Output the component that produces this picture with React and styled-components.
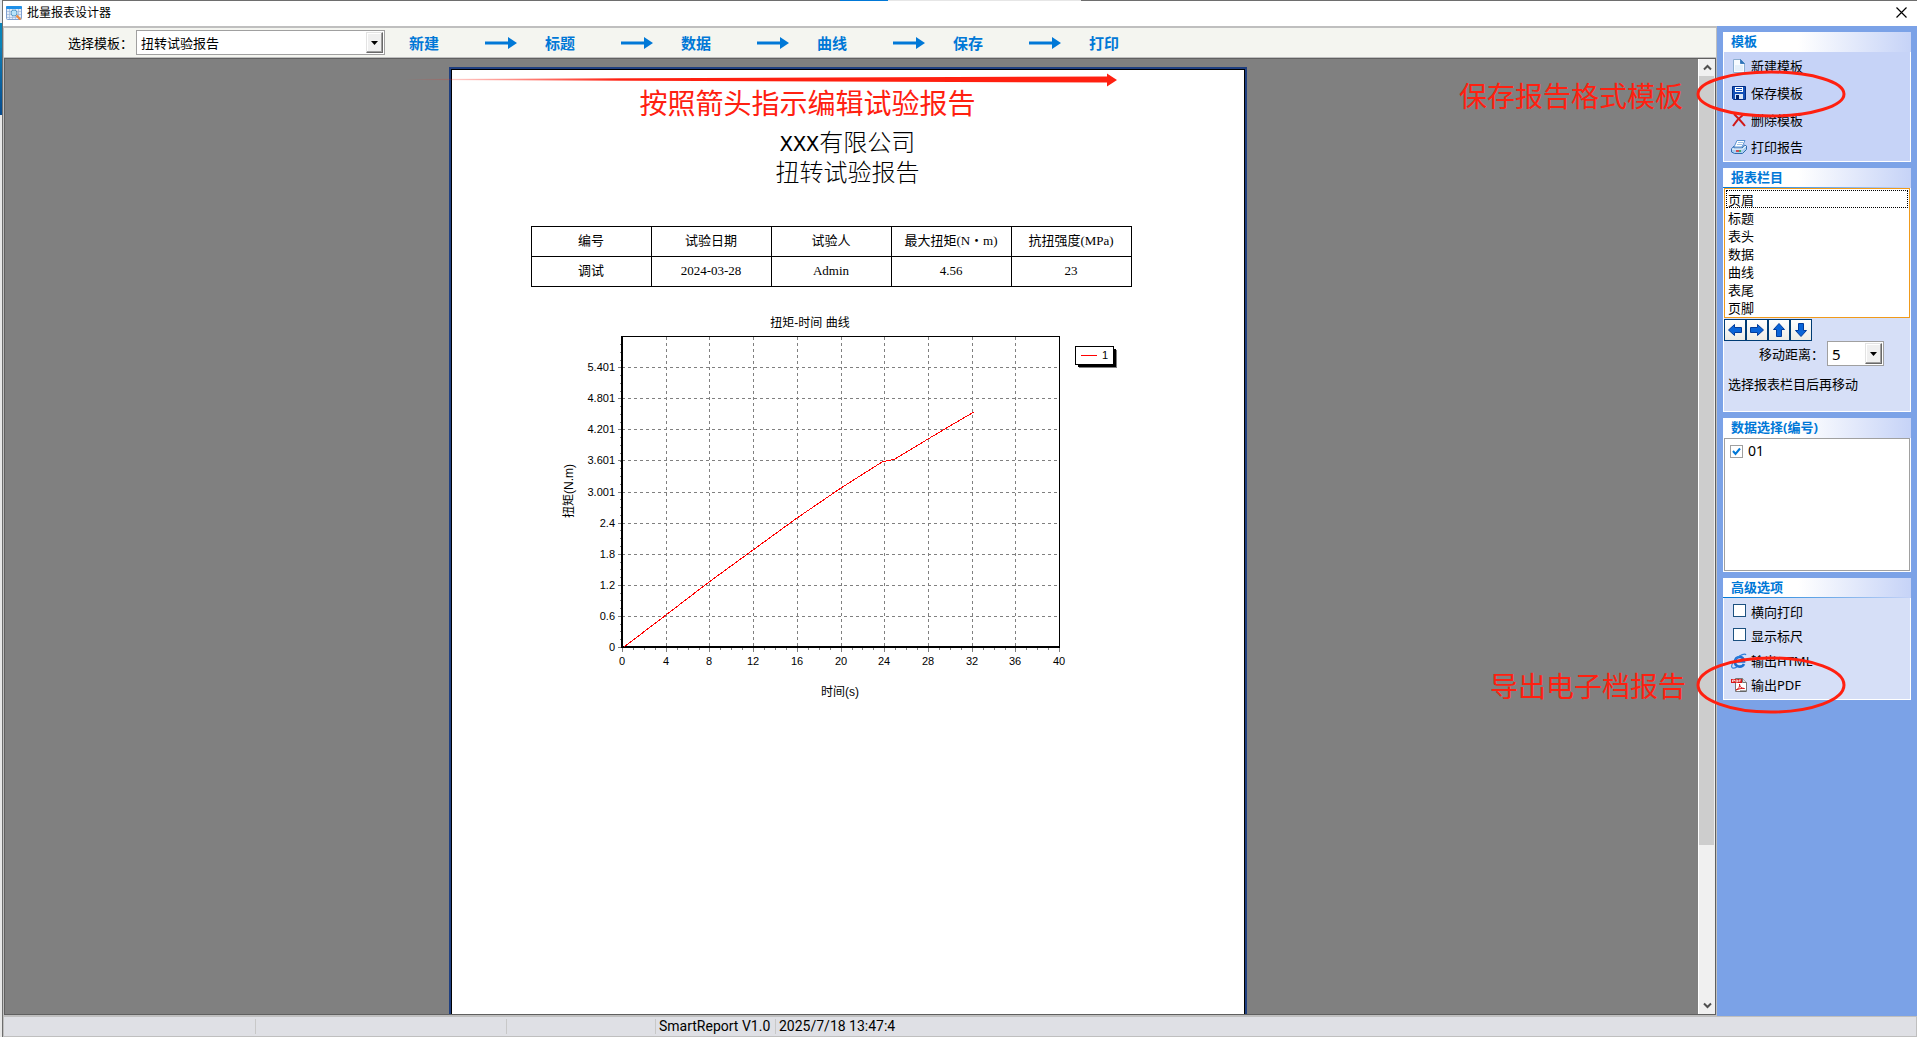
import React, { useState } from 'react'
import styled, { createGlobalStyle } from "styled-components"

let GlobalStyle = createGlobalStyle`
  * {
    box-sizing: border-box;
  }

  body {
    margin: 0;
    overflow: hidden;
    color: black;
    font-family: "Noto Sans", "Noto Sans CJK SC", sans-serif;
    font-size: 13px;
    line-height: 18px;
  }

  button, select, input {
    font: inherit;
    color: inherit;
    margin: 0;
  }

  svg {
    display: block;
    flex: none;
  }
`

let Desktop = styled.div`
  position: relative;
  height: 100vh;
  padding: 0 0 0 2px;
  overflow: hidden;
  background: linear-gradient(#e3e8ee 23px, #0a84b8 23px, #0a84b8 48px, #0f7cb4 48px, #064a8c 115px, #e8e8e8 115px);
`

let Window = styled.div`
  display: flex;
  flex-direction: column;
  height: 100%;
  border-left: 1px solid #6e6e6e;
  background: white;
`

let TopEdge = styled.div`
  display: grid;
  grid-template-columns: 837fr 48fr 193fr 836fr;
  height: 1px;
  background: #6e6e6e;
`

let EdgePart = styled.div`
  background: ${props => props.$color};
`

let TitleBar = styled.header`
  display: flex;
  align-items: center;
  gap: 5px;
  height: 25px;
  padding: 0 8px 2px 3px;
`

let WindowTitle = styled.h1`
  flex: 1;
  margin: 0;
  font-size: 12px;
  font-weight: normal;
`

let CloseButton = styled.button`
  display: flex;
  padding: 2px;
  border: 0;
  background: none;
`

let Main = styled.div`
  display: flex;
  flex: 1;
  min-height: 0;
`

let Editor = styled.main`
  display: flex;
  flex-direction: column;
  flex: 1;
  min-width: 0;
  border: 1px solid #bfbfbf;
  border-top-width: 2px;
`

let Toolbar = styled.div`
  display: flex;
  align-items: center;
  height: 30px;
  flex: none;
  padding-left: 64px;
  background: #f4f5f0;
  border-bottom: 1px solid #bfbfbf;
`

let TemplateField = styled.div`
  display: flex;
  align-items: center;
  gap: 3px;
`

let ComboBox = styled.span`
  position: relative;
  display: flex;
  width: ${props => props.$width}px;
  height: 25px;
  border: 1px solid #a0a0a0;
  background: white;
`

let ComboSelect = styled.select`
  appearance: none;
  width: 100%;
  padding: 0 20px 0 4px;
  border: 0;
  background: none;
  font-size: ${props => props.$large ? 15 : 13}px;
  outline: none;
`

let ComboArrow = styled.span`
  position: absolute;
  top: 1px;
  right: 1px;
  display: flex;
  align-items: center;
  justify-content: center;
  width: 17px;
  height: 21px;
  border: 1px solid;
  border-color: #e3e3e3 #696969 #696969 #e3e3e3;
  box-shadow: inset -1px -1px #a0a0a0, inset 1px 1px white;
  background: #f0f0f0;
  pointer-events: none;
`

let Steps = styled.nav`
  display: flex;
  align-items: center;
  margin-left: 24px;
`

let StepButton = styled.button`
  padding: 0;
  border: 0;
  background: none;
  color: #0078d7;
  font-size: 15px;
  font-weight: bold;
  line-height: 20px;
`

let StepArrow = styled.svg`
  margin: 0 28px 0 46px;
`

let Workspace = styled.div`
  display: flex;
  flex: 1;
  min-height: 0;
  border: 1px solid #606060;
  background: #808080;
`

let Canvas = styled.div`
  flex: 1;
  min-width: 0;
  padding: 8px 8px 0 0;
  overflow: hidden;
`

let Paper = styled.article`
  position: relative;
  width: 798px;
  height: 1123px;
  margin: 0 auto;
  padding: 57px 0 0;
  border: 2px solid #1f3f80;
  outline: 1px solid black;
  outline-offset: -3px;
  background: white;
`

let ReportTitle = styled.h2`
  margin: 0;
  text-align: center;
  font: 24px/30px "Noto Sans CJK SC", sans-serif;
  font-weight: 300;
`

let LatinPart = styled.span`
  font-family: "Liberation Mono", monospace;
  font-size: 22px;
  line-height: 20px;
`

let ReportTable = styled.table`
  width: 601px;
  margin: 40px 0 0 80px;
  border-collapse: collapse;
  table-layout: fixed;
  font: 13px/18px "Liberation Serif", "Noto Sans CJK SC", serif;

  th, td {
    height: 30px;
    padding: 0 0 2px;
    border: 1px solid black;
    font-weight: normal;
    text-align: center;
  }
`

let ChartArea = styled.svg`
  margin: 22px 0 0 89px;
  font-family: "Liberation Sans", "Noto Sans CJK SC", sans-serif;
`

let ScrollBar = styled.div`
  display: flex;
  flex-direction: column;
  align-items: center;
  justify-content: space-between;
  width: 17px;
  border-left: 1px solid white;
  background: #f0f0f0;
`

let ScrollButton = styled.button`
  display: flex;
  align-items: center;
  justify-content: center;
  width: 16px;
  height: 17px;
  padding: 0;
  border: 0;
  background: none;
`

let ScrollTrack = styled.div`
  flex: 1;
  width: 100%;
  padding-right: 1px;
`

let ScrollThumb = styled.div`
  height: 83.5%;
  background: #cdcdcd;
`

let Sidebar = styled.aside`
  display: flex;
  flex-direction: column;
  gap: 6px;
  width: 200px;
  flex: none;
  padding: 6px;
  background: #7ba2e7;
`

let PanelBox = styled.section`
  display: flex;
  flex-direction: column;
  flex: none;
`

let PanelTitle = styled.h2`
  height: 20px;
  margin: 0;
  padding-left: 8px;
  background: linear-gradient(90deg, white 40%, #c6d3f7);
  color: #0078d7;
  font-size: 13px;
  font-weight: bold;
  line-height: 19px;
`

let PanelRule = styled.div`
  height: 1px;
  margin-top: -1px;
  background: linear-gradient(90deg, #0078d7, #c6d3f7);
`

let PanelBody = styled.div`
  height: ${props => props.$height}px;
  padding: ${props => props.$pad || "0"};
  border: 1px solid white;
  border-top: 0;
  background: ${props => props.$strong ? "#c6d3f7" : "#d6dff7"};
`

let ActionButton = styled.button`
  display: flex;
  align-items: center;
  gap: 4px;
  height: ${props => props.$height}px;
  padding: 0 0 0 7px;
  border: 0;
  background: none;
  white-space: nowrap;
`

let ColumnList = styled.select`
  display: block;
  width: 100%;
  height: 130px;
  padding: 1px;
  border: 1px solid #f09a1a;
  border-radius: 0;
  background: white;
  overflow: hidden;
  outline: none;

  option {
    height: 18px;
    min-height: 18px;
    padding: 0 2px 2px;
    line-height: 16px;
  }

  option:first-child {
    outline: 1px dotted black;
    outline-offset: -1px;
  }
`

let MoveButtons = styled.div`
  display: flex;
  padding-top: 1px;
`

let MoveButton = styled.button`
  display: flex;
  align-items: center;
  justify-content: center;
  width: 22px;
  height: 22px;
  padding: 0;
  border: 1px solid #003c74;
  background: linear-gradient(white, #ecebe5);
`

let DistanceRow = styled.div`
  display: flex;
  align-items: center;
  gap: 3px;
  padding-left: 35px;
`

let Hint = styled.p`
  margin: 9px 0 0 4px;
`

let DataList = styled.div`
  height: 133px;
  padding: 3px 5px;
  border: 1px solid #a0a0a0;
  background: white;
`

let CheckLabel = styled.label`
  display: flex;
  align-items: center;
  gap: 5px;
  height: ${props => props.$roomy ? 18 : 24}px;
  padding-left: ${props => props.$roomy ? 0 : 9}px;
  font-size: ${props => props.$roomy ? 14 : 13}px;
`

let CheckBox = styled.input`
  appearance: none;
  width: 13px;
  height: 13px;
  margin-bottom: ${props => props.$light ? 0 : 4}px;
  border: 1px solid ${props => props.$light ? "#a0a0a0" : "#1c5180"};
  background: white;

  &:checked {
    background: white url("data:image/svg+xml,%3Csvg xmlns='http://www.w3.org/2000/svg' viewBox='0 0 11 11'%3E%3Cpath d='M2 5l2.500 3L9 2.500' fill='none' stroke='%230078d7' stroke-width='2'/%3E%3C/svg%3E");
  }
`

let StatusBar = styled.footer`
  display: flex;
  align-items: center;
  height: 21px;
  flex: none;
  border: 1px solid #bfbfbf;
  background: #dfe0e5;
  font-family: Roboto, "Noto Sans CJK SC", sans-serif;
  font-size: 14px;
`

let StatusCell = styled.span`
  width: ${props => props.$width}px;
  height: 15px;
  padding-left: 3px;
  border-right: 1px solid #c8c8c8;
  line-height: 15px;
  white-space: nowrap;

  &:last-child {
    border: 0;
  }
`

// red marks drawn over the window
let GuideArrow = styled.svg`
  position: absolute;
  top: 3px;
  left: -46px;
`

let GuideNote = styled.div`
  position: absolute;
  top: ${props => props.$top}px;
  left: ${props => props.$left !== undefined ? props.$left + "px" : "auto"};
  right: ${props => props.$right !== undefined ? props.$right + "px" : "auto"};
  color: #ff2010;
  font-size: 28px;
  line-height: 36px;
  white-space: nowrap;
  pointer-events: none;
`

let GuideRing = styled.svg`
  position: absolute;
  top: ${props => props.$top}px;
  right: 70px;
  pointer-events: none;
`

let AppIcon = () => <svg width="16" height="14" viewBox="0 0 16 14">
  <rect x="0.5" y="0.5" width="15" height="13" rx="1" fill="#e4edf8" stroke="#7f9fd0"/>
  <rect width="16" height="3" rx="1" fill="#1e8fe8"/>
  <path d="M3.500 3v10M6.500 3v10M9.500 3v10M12.500 3v10M1 5.500h14M1 8.500h14M1 11.500h14" stroke="#9db8dc" strokeWidth="0.7"/>
  <circle cx="8" cy="7" r="3" fill="#b9e4fa" stroke="#5d9cc8"/>
  <path d="M10.500 9.500l4 4" stroke="#f08a3c" strokeWidth="2.200"/>
</svg>

let CloseIcon = () => <svg width="11" height="11" viewBox="0 0 11 11">
  <path d="M0.500 0.500l10 10M10.500 0.500l-10 10" stroke="black" strokeWidth="1.200"/>
</svg>

let DropIcon = () => <svg width="7" height="4" viewBox="0 0 7 4">
  <path d="M0 0h7L3.500 4z" fill="black"/>
</svg>

let NewIcon = () => <svg width="16" height="16" viewBox="0 0 16 16">
  <path d="M2.500 1.500h7l4 4v9h-11z" fill="#f7fbff" stroke="#8cadd0"/>
  <path d="M9.500 1.500v4h4z" fill="#2f74b8" stroke="#3f7fc0"/>
  <path d="M4 8h8M4 10h8M4 12h8" stroke="#d2e4f5"/>
</svg>

let SaveIcon = () => <svg width="16" height="16" viewBox="0 0 16 16">
  <path d="M1.500 1.500h13v13h-12l-1-1z" fill="#1450b8" stroke="#002b85"/>
  <path d="M4 2h8v5H4z" fill="white"/>
  <path d="M5 3.500h6M5 5.500h6" stroke="#1450b8"/>
  <path d="M4 9h8v5H4z" fill="#d8e4f8"/>
  <path d="M5 10h3v4H5z" fill="#00236e"/>
</svg>

let DeleteIcon = () => <svg width="16" height="16" viewBox="0 0 16 16">
  <path d="M3 2C6 5 10 9 14 14M13 2C9 5 5 9 2 14" fill="none" stroke="#d01818" strokeWidth="2"/>
</svg>

let PrintIcon = () => <svg width="16" height="16" viewBox="0 0 16 16">
  <path d="M3 7L0.500 10v3l3 1.500h8l4-4V7l-2-1-2.500 3H3z" fill="#a8cdf0" stroke="#2f6cb0"/>
  <path d="M6 1.500h8L11 8H3z" fill="white" stroke="#5b92cf"/>
  <path d="M7 3.500h5M6 5.500h5" stroke="#9dc0e6"/>
  <path d="M1 10h10.500L15 7" fill="none" stroke="white"/>
  <path d="M5 12h3" stroke="#e02020" strokeWidth="1.500"/>
  <path d="M8 12h2" stroke="#20a040" strokeWidth="1.500"/>
</svg>

let HtmlIcon = () => <svg width="16" height="16" viewBox="0 0 16 16">
  <path d="M4.500 8.500h8.500C13 2 4.500 3 4 8.500c-.3 6 7 6.500 9 2.500" fill="none" stroke="#1d6fd0" strokeWidth="2.600"/>
  <path d="M15 2c-1-2-6 0-9 3-4 4-6 8-5 9.500s3 .5 5-.5" fill="none" stroke="#2f80dc" strokeWidth="1.200"/>
</svg>

let PdfIcon = () => <svg width="16" height="16" viewBox="0 0 16 16">
  <path d="M4.500 1.500h7l4 4v9h-11z" fill="white" stroke="#777"/>
  <path d="M11.500 1.500v4h4" fill="#ddd" stroke="#777"/>
  <path d="M0 2h11v4H0z" fill="#d81818"/>
  <path d="M1.500 5V3h2v1h-2M5 3v2h1.500V3zM8 5V3h2M8 4h1.500" fill="none" stroke="white" strokeWidth="0.700"/>
  <path d="M5 13c3-1 4-4 3.500-6 0 3 2 4.500 5 4.500-3-.5-6 .5-8.500 1.500z" fill="none" stroke="#d81818"/>
  <path d="M9 14h6" stroke="#555"/>
</svg>

let MoveIcon = ({ angle }) => <svg width="14" height="14" viewBox="0 0 14 14">
  <path
    d="M0.500 7L6.500 1.500v3h7v5h-7v3z"
    fill="#0a64d8"
    stroke="#003c9c"
    transform={`rotate(${angle} 7 7)`}
  />
</svg>

let ScrollIcon = ({ down }) => <svg width="9" height="7" viewBox="0 0 9 7">
  <path d={down ? "M1 1.500l3.500 3.500L8 1.500" : "M1 5.500L4.500 2 8 5.500"} fill="none" stroke="#505050" strokeWidth="2"/>
</svg>

let steps = ["新建", "标题", "数据", "曲线", "保存", "打印"]
let columns = ["页眉", "标题", "表头", "数据", "曲线", "表尾", "页脚"]
let headers = ["编号", "试验日期", "试验人", "最大扭矩(N・m)", "抗扭强度(MPa)"]
let values = ["调试", "2024-03-28", "Admin", "4.56", "23"]

let xTicks = [0, 4, 8, 12, 16, 20, 24, 28, 32, 36, 40]
let yTicks = [0, 0.6, 1.2, 1.8, 2.4, 3.001, 3.601, 4.201, 4.801, 5.401]
let curve = [
  [0.2, 0], [4, 0.62], [8, 1.25], [12, 1.88], [16, 2.49], [20, 3.06],
  [23.8, 3.58], [25, 3.62], [28, 4.02], [30.5, 4.32], [32.2, 4.54]
]

let px = v => Math.round(82 + v * 10.93)
let py = v => Math.round(338 - v * 51.8)

let Chart = () => <ChartArea width="600" height="400" viewBox="0 0 600 400" fontSize="11">
  <text x="270" y="18" fontSize="12" textAnchor="middle">扭矩-时间 曲线</text>
  <g stroke="#808080" strokeDasharray="3 3" shapeRendering="crispEdges">
    {xTicks.slice(1, -1).map(v => <path key={v} d={`M${px(v) + 0.5} 28V338`}/>)}
    {yTicks.slice(1).map(v => <path key={v} d={`M82 ${py(v) + 0.5}H519`}/>)}
  </g>
  <g stroke="#808080" shapeRendering="crispEdges">
    {xTicks.map(v => <path key={v} d={`M${px(v) + 0.5} 339v4`}/>)}
    {[...Array(40)].map((_, i) => <path key={i} d={`M${px(i) + 0.5} 339v2`}/>)}
    {yTicks.map(v => <path key={v} d={`M78 ${py(v) + 0.5}h4`}/>)}
    {[...Array(40)].map((_, i) => <path key={i} d={`M80 ${py(i * 0.15) + 0.5}h2`}/>)}
  </g>
  <path d="M82 27.5H519.5V338" fill="none" stroke="black" shapeRendering="crispEdges"/>
  <path d="M81 27h2v310h437v2H81z" fill="black"/>
  {xTicks.map(v => <text key={v} x={px(v)} y="356" textAnchor="middle">{v}</text>)}
  {yTicks.map(v => <text key={v} x="75" y={py(v) + 4} textAnchor="end">{v}</text>)}
  <polyline
    points={curve.map(p => px(p[0]) + "," + py(p[1])).join(" ")}
    fill="none"
    stroke="red"
    shapeRendering="crispEdges"
  />
  <text x="300" y="387" fontSize="12" textAnchor="middle">时间(s)</text>
  <text fontSize="12" textAnchor="middle" transform="translate(33 182) rotate(-90)">扭矩(N.m)</text>
  <rect x="539" y="41" width="38" height="18" fill="#808080"/>
  <rect x="538" y="40" width="38" height="18" fill="black"/>
  <rect x="535.5" y="37.5" width="38" height="18" fill="white" stroke="black"/>
  <path d="M541 46.500h16" stroke="red" shapeRendering="crispEdges"/>
  <text x="562" y="50">1</text>
</ChartArea>

let Panel = ({ title, rule, children, ...body }) => <PanelBox>
  <PanelTitle>{title}</PanelTitle>
  {rule && <PanelRule/>}
  <PanelBody {...body}>{children}</PanelBody>
</PanelBox>

let Ring = ({ top, height }) => <GuideRing $top={top} width="152" height={height}>
  <ellipse cx="76" cy={height / 2} rx="73" ry={height / 2 - 3} fill="none" stroke="#ff2010" strokeWidth="3"/>
</GuideRing>

let App = () => {
  let [landscape, setLandscape] = useState(false)
  let [ruler, setRuler] = useState(false)
  let [selected, setSelected] = useState(true)

  return <Desktop>
    <GlobalStyle/>
    <Window>
      <TopEdge>
        <EdgePart/>
        <EdgePart $color="#0078d7"/>
        <EdgePart $color="#e6e6e6"/>
      </TopEdge>
      <TitleBar>
        <AppIcon/>
        <WindowTitle>批量报表设计器</WindowTitle>
        <CloseButton aria-label="关闭"><CloseIcon/></CloseButton>
      </TitleBar>
      <Main>
        <Editor>
          <Toolbar>
            <TemplateField>
              <label htmlFor="template">选择模板：</label>
              <ComboBox $width={249}>
                <ComboSelect id="template">
                  <option>扭转试验报告</option>
                </ComboSelect>
                <ComboArrow><DropIcon/></ComboArrow>
              </ComboBox>
            </TemplateField>
            <Steps>
              {
                steps.map((step, i) => <React.Fragment key={step}>
                  {
                    i > 0 &&
                      <StepArrow width="32" height="14" viewBox="0 0 32 14">
                        <path d="M0 5.500h23V1l9 6-9 6V8.500H0z" fill="#0078d7"/>
                      </StepArrow>
                  }
                  <StepButton>{step}</StepButton>
                </React.Fragment>)
              }
            </Steps>
          </Toolbar>
          <Workspace>
            <Canvas>
              <Paper>
                <ReportTitle><LatinPart>XXX</LatinPart>有限公司<br/>扭转试验报告</ReportTitle>
                <ReportTable>
                  <thead>
                    <tr>{headers.map(h => <th key={h}>{h}</th>)}</tr>
                  </thead>
                  <tbody>
                    <tr>{values.map(v => <td key={v}>{v}</td>)}</tr>
                  </tbody>
                </ReportTable>
                <Chart/>
                <GuideArrow width="714" height="16" viewBox="0 0 714 16">
                  <defs>
                    <linearGradient id="fade">
                      <stop offset="0" stopColor="#ff2010" stopOpacity="0"/>
                      <stop offset="0.3" stopColor="#ff2010"/>
                    </linearGradient>
                  </defs>
                  <path d="M0 7L702 4.500V1.500L712 8l-10 6.500V10.500L0 8z" fill="url(#fade)"/>
                </GuideArrow>
                <GuideNote $top={16} $left={189}>按照箭头指示编辑试验报告</GuideNote>
              </Paper>
            </Canvas>
            <ScrollBar>
              <ScrollButton aria-label="向上"><ScrollIcon/></ScrollButton>
              <ScrollTrack><ScrollThumb/></ScrollTrack>
              <ScrollButton aria-label="向下"><ScrollIcon down/></ScrollButton>
            </ScrollBar>
          </Workspace>
        </Editor>
        <Sidebar>
          <Panel title="模板" $height={110} $strong>
            <ActionButton $height={27}><NewIcon/>新建模板</ActionButton>
            <ActionButton $height={27}><SaveIcon/>保存模板</ActionButton>
            <ActionButton $height={27}><DeleteIcon/>删除模板</ActionButton>
            <ActionButton $height={27}><PrintIcon/>打印报告</ActionButton>
          </Panel>
          <Panel title="报表栏目" rule $height={224}>
            <ColumnList size={7} aria-label="报表栏目">
              {columns.map(c => <option key={c}>{c}</option>)}
            </ColumnList>
            <MoveButtons>
              <MoveButton aria-label="左移"><MoveIcon angle={0}/></MoveButton>
              <MoveButton aria-label="右移"><MoveIcon angle={180}/></MoveButton>
              <MoveButton aria-label="上移"><MoveIcon angle={90}/></MoveButton>
              <MoveButton aria-label="下移"><MoveIcon angle={270}/></MoveButton>
            </MoveButtons>
            <DistanceRow>
              <label htmlFor="distance">移动距离：</label>
              <ComboBox $width={57}>
                <ComboSelect id="distance" $large>
                  <option>5</option>
                </ComboSelect>
                <ComboArrow><DropIcon/></ComboArrow>
              </ComboBox>
            </DistanceRow>
            <Hint>选择报表栏目后再移动</Hint>
          </Panel>
          <Panel title="数据选择(编号)" $height={134}>
            <DataList>
              <CheckLabel $roomy>
                <CheckBox type="checkbox" $light checked={selected} onChange={() => setSelected(!selected)}/>
                01
              </CheckLabel>
            </DataList>
          </Panel>
          <Panel title="高级选项" rule $height={102} $pad="2px 0 0">
            <CheckLabel>
              <CheckBox type="checkbox" checked={landscape} onChange={() => setLandscape(!landscape)}/>
              横向打印
            </CheckLabel>
            <CheckLabel>
              <CheckBox type="checkbox" checked={ruler} onChange={() => setRuler(!ruler)}/>
              显示标尺
            </CheckLabel>
            <ActionButton $height={25}><HtmlIcon/>输出HTML</ActionButton>
            <ActionButton $height={24}><PdfIcon/>输出PDF</ActionButton>
          </Panel>
        </Sidebar>
      </Main>
      <StatusBar>
        <StatusCell $width={252}/>
        <StatusCell $width={251}/>
        <StatusCell $width={149}/>
        <StatusCell $width={120}>SmartReport V1.0</StatusCell>
        <StatusCell>2025/7/18 13:47:4</StatusCell>
      </StatusBar>
    </Window>
    <GuideNote $top={78} $right={234}>保存报告格式模板</GuideNote>
    <Ring top={69} height={50}/>
    <GuideNote $top={668} $right={231}>导出电子档报告</GuideNote>
    <Ring top={655} height={60}/>
  </Desktop>
}

export default App
